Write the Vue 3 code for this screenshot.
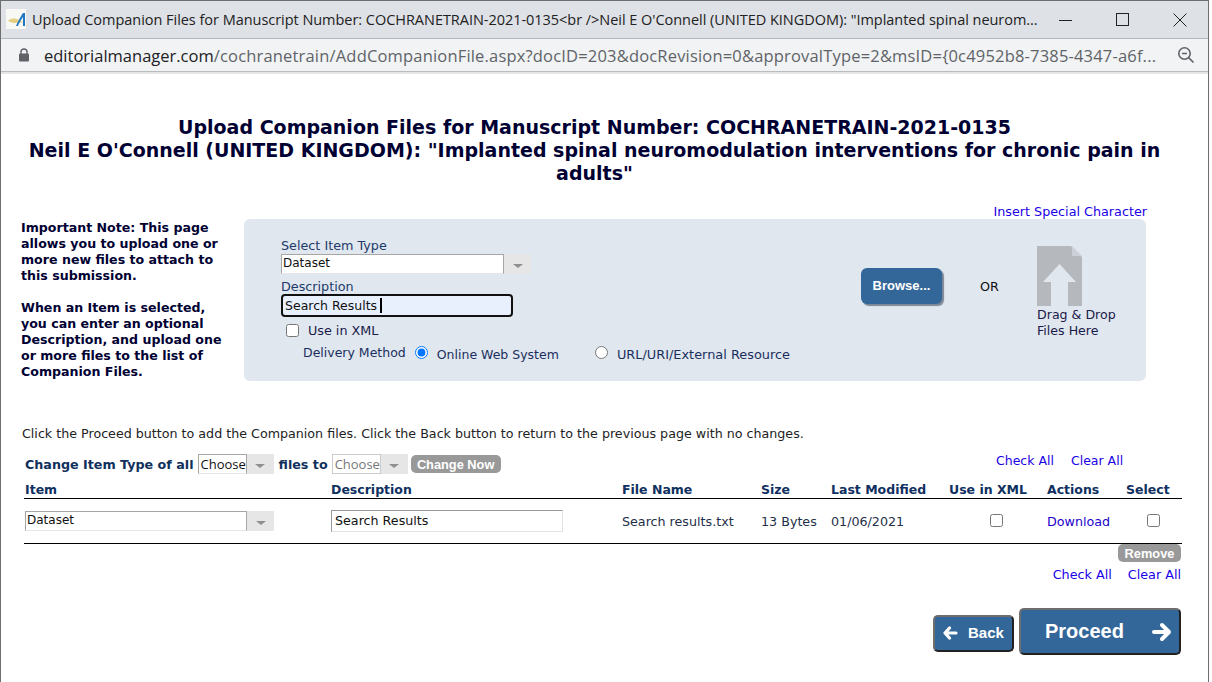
<script setup>
const headers = ['Item', 'Description', 'File Name', 'Size', 'Last Modified', 'Use in XML', 'Actions', 'Select']
</script>

<template>
  <div class="screen">
  <div class="window">
    <header class="titlebar">
      <svg class="favicon" width="20" height="20" viewBox="0 0 20 20">
        <rect width="20" height="20" fill="#f8f8f4" />
        <path d="M2 12 C5 9 9 9 13 11 L17 13 C11 15 5 14 2 12Z" fill="#e6cf82" />
        <path d="M10 17 C12 12 15 7 17 4 L19 4 L19 17 L17 17 L17 8 C15 11 13 14 12 17Z" fill="#1f78c1" />
      </svg>
      <div class="wintitle">Upload Companion Files for Manuscript Number: COCHRANETRAIN-2021-0135&lt;br /&gt;Neil E O'Connell (UNITED KINGDOM): "Implanted spinal neurom...</div>
      <div class="wincontrols">
        <svg width="14" height="14" viewBox="0 0 14 14"><path d="M0 7.5H13" stroke="#222" fill="none" /></svg>
        <svg width="14" height="14" viewBox="0 0 14 14"><rect x="0.5" y="0.5" width="12" height="12" stroke="#222" fill="none" /></svg>
        <svg width="14" height="14" viewBox="0 0 14 14"><path d="M0.5 0.5L13.5 13.5M13.5 0.5L0.5 13.5" stroke="#222" fill="none" /></svg>
      </div>
    </header>
    <div class="addressbar">
      <svg width="12" height="14" viewBox="0 0 12 14" class="lock">
        <rect x="1" y="5.5" width="10" height="8" rx="1" fill="#5f6368" />
        <path d="M3 6V4a3 3 0 0 1 6 0v2" fill="none" stroke="#5f6368" stroke-width="1.4" />
      </svg>
      <div class="url"><span class="host">editorialmanager.com</span><span class="path">/cochranetrain/AddCompanionFile.aspx?docID=203&amp;docRevision=0&amp;approvalType=2&amp;msID={0c4952b8-7385-4347-a6f...</span></div>
      <svg width="18" height="18" viewBox="0 0 18 18" class="zoomicon">
        <circle cx="7.5" cy="7.5" r="5.7" fill="none" stroke="#5f6368" stroke-width="1.6" />
        <path d="M5 7.5H10M11.6 11.6L16.5 16.5" fill="none" stroke="#5f6368" stroke-width="1.6" />
      </svg>
    </div>

    <main class="page">
      <h1 class="title">Upload Companion Files for Manuscript Number: COCHRANETRAIN-2021-0135<br />Neil E O'Connell (UNITED KINGDOM): "Implanted spinal neuromodulation interventions for chronic pain in adults"</h1>

      <div class="special"><a>Insert Special Character</a></div>

      <section class="upload">
        <aside class="note">
          <p>Important Note: This page allows you to upload one or more new files to attach to this submission.</p>
          <p>When an Item is selected, you can enter an optional Description, and upload one or more files to the list of Companion Files.</p>
        </aside>
        <div class="panel">
          <div class="form">
            <label class="lbl">Select Item Type</label>
            <div class="select big">
              <span class="sel-text">Dataset</span><span class="sel-arrow"><i></i></span>
            </div>
            <label class="lbl desc-lbl">Description</label>
            <div class="focusinput"><span>Search Results</span><b class="caret"></b></div>
            <label class="xml"><input type="checkbox" /><span>Use in XML</span></label>
            <div class="delivery">
              <span class="dm">Delivery Method</span>
              <input type="radio" name="dm" checked />
              <span class="opt">Online Web System</span>
              <input class="r2" type="radio" name="dm" />
              <span class="opt url-opt">URL/URI/External Resource</span>
            </div>
          </div>
          <button class="browse">Browse...</button>
          <span class="or">OR</span>
          <div class="drop">
            <svg width="45" height="60" viewBox="0 0 45 60">
              <path d="M0 0H34L45 11V60H0Z" fill="#b5b9bd" />
              <path d="M35 0L45 10H35Z" fill="#ccd1d9" />
              <path d="M22.5 18L39 36H31V60H14V36H6Z" fill="#e0e7ef" />
            </svg>
            <div>Drag &amp; Drop<br />Files Here</div>
          </div>
        </div>
      </section>

      <p class="instr">Click the Proceed button to add the Companion files. Click the Back button to return to the previous page with no changes.</p>

      <div class="bulk">
        <div class="change">
          <b>Change Item Type of all</b>
          <div class="select small"><span class="sel-text">Choose</span><span class="sel-arrow"><i></i></span></div>
          <b>files to</b>
          <div class="select small disabled"><span class="sel-text">Choose</span><span class="sel-arrow"><i></i></span></div>
          <button class="gray">Change Now</button>
        </div>
        <div class="links top"><a>Check All</a><a>Clear All</a></div>
      </div>

      <div class="grid head">
        <span v-for="h in headers" :key="h">{{ h }}</span>
      </div>
      <div class="grid row">
        <div class="select item"><span class="sel-text">Dataset</span><span class="sel-arrow"><i></i></span></div>
        <div class="descinput">Search Results</div>
        <span>Search results.txt</span>
        <span>13 Bytes</span>
        <span>01/06/2021</span>
        <span class="center-xml"><input type="checkbox" /></span>
        <a class="dl">Download</a>
        <span class="center-sel"><input type="checkbox" /></span>
      </div>

      <div class="after">
        <button class="gray remove">Remove</button>
        <div class="links bottom"><a>Check All</a><a>Clear All</a></div>
      </div>

      <div class="nav">
        <button class="back">
          <svg width="15" height="14" viewBox="0 0 15 14"><path d="M6.5 2L2 7L6.5 12M3 7H13" fill="none" stroke="#fff" stroke-width="3.2" stroke-linecap="round" stroke-linejoin="round" /></svg>
          <span>Back</span>
        </button>
        <button class="proceed">
          <span>Proceed</span>
          <svg width="21" height="20" viewBox="0 0 21 20"><path d="M11 3L18 10L11 17M17 10H3" fill="none" stroke="#fff" stroke-width="4" stroke-linecap="round" stroke-linejoin="round" /></svg>
        </button>
      </div>
    </main>
  </div>
  </div>
</template>

<style scoped>
.screen { width: 1212px; height: 682px; background: #fff; overflow: hidden; }
.window {
  width: 1209px;
  height: 682px;
  box-sizing: border-box;
  border: solid #6e6e6e;
  border-width: 1px 1px 0 1px;
  overflow: hidden;
  background: #fff;
  font-family: "DejaVu Sans", Verdana, sans-serif;
  color: #000033;
}
.titlebar {
  height: 37px;
  background: #dee1e6;
  display: flex;
  align-items: center;
  padding-left: 5px;
  border-bottom: 1px solid #b6b8bb;
}
.favicon { flex: none; margin-top: -2px; }
.wintitle {
  margin-left: 6px;
  width: 1010px;
  white-space: nowrap;
  overflow: hidden;
  font: 14.5px "Open Sans", sans-serif;
  letter-spacing: -0.035px;
  color: #222;
}
.wincontrols {
  margin-left: 17px;
  display: flex;
  gap: 43px;
  align-items: center;
}
.addressbar {
  height: 32px;
  background: #f1f3f4;
  display: flex;
  align-items: center;
  border-bottom: 1px solid #b9bbbd;
  box-shadow: 0 2px 0 #e6e6e6;
  position: relative;
}
.lock { margin-left: 17px; flex: none; }
.url {
  margin-left: 14px;
  width: 1119px;
  white-space: nowrap;
  overflow: hidden;
  font: 16.5px "Open Sans", sans-serif;
  color: #5f6368;
}
.host { color: #202124; }
.path { letter-spacing: 0.18px; }
.zoomicon { margin-left: 14px; flex: none; }

.page { padding: 0 26px 0 20px; font-size: 12.75px; }
.title {
  margin: 44px 14px 0 0;
  font-size: 19px;
  line-height: 23px;
  font-weight: bold;
  text-align: center;
  color: #000033;
}
.special {
  margin-top: 19px;
  height: 15px;
  padding-right: 35px;
  text-align: right;
  line-height: 16px;
}
a { color: #1a00e6; }
.upload { display: flex; }
.note {
  width: 223px;
  box-sizing: border-box;
  padding-right: 20px;
  flex: none;
  font-weight: bold;
  font-size: 12.6px;
  line-height: 16px;
  color: #000033;
  padding-top: 1px;
}
.note p { margin: 0 0 16px; }
.panel {
  width: 902px;
  height: 162px;
  background: #e0e7ef;
  border-radius: 6px;
  display: flex;
  align-items: flex-start;
  position: relative;
}
.form { width: 617px; padding: 19px 0 0 37px; box-sizing: border-box; flex: none; color: #1b2f5e; }
.lbl { display: block; line-height: 15px; color: #1d3a6a; }
.select { display: flex; height: 20px; background: #fff; box-sizing: border-box; font-size: 12px; color: #111; }
.sel-text {
  flex: 1;
  border: 1px solid #a6a6a6;
  border-bottom-color: #e6e6e6;
  line-height: 17px;
  padding-left: 1px;
  overflow: hidden;
}
.sel-arrow {
  flex: none;
  width: 27px;
  background: #e6e6e6;
  display: flex;
  align-items: center;
  justify-content: center;
}
.sel-arrow i {
  width: 0;
  height: 0;
  border: 5px solid transparent;
  border-top: 4px solid #8f8f8f;
  border-bottom: 0;
  margin-top: 3px;
}
.big { width: 250px; margin-top: 1px; }
.desc-lbl { margin-top: 5px; }
.focusinput {
  width: 232px;
  height: 23px;
  box-sizing: border-box;
  border: 2px solid #111;
  border-radius: 4px;
  background: #e8f0fe;
  color: #111;
  font-size: 12.5px;
  line-height: 19px;
  padding-left: 2px;
  display: flex;
  align-items: center;
}
.caret { width: 2px; height: 15px; background: #000; margin-left: 3px; }
.xml { display: flex; align-items: center; margin: 5px 0 0 4px; height: 16px; color: #1b1b4a; }
.xml input { margin: 0 9px 0 1px; }
.delivery { display: flex; align-items: center; margin: 8px 0 0 22px; height: 16px; white-space: nowrap; color: #1b2f5e; font-size: 12.5px; }
.dm { margin-right: 9px; margin-top: -3px; }
.delivery input { margin: -3px 0 0 0; }
.opt { margin-left: 9px; }
.url-opt { font-size: 12.9px; }
.r2 { margin-left: 36px !important; }
.browse {
  margin-top: 49px;
  width: 81px;
  height: 36px;
  border: 0;
  border-radius: 6px;
  background: #336699;
  color: #fff;
  font: bold 13px "Liberation Sans", sans-serif;
  box-shadow: 2px 2px 1px #7b8794;
  padding: 0 0 1px;
}
.or { margin: 60px 0 0 38px; width: 57px; color: #111; flex: none; line-height: 15px; }
.drop { margin-top: 27px; color: #1a1a4a; line-height: 16px; font-size: 12.6px; }
.drop svg { display: block; margin-bottom: 1px; }
.instr { margin: 30px 0 0 1px; line-height: 16px; color: #222; font-size: 12.68px; }
.bulk { display: flex; margin-top: 10px; height: 24px; align-items: center; }
.change { display: flex; align-items: center; margin-left: 4px; width: 971px; color: #10305c; }
.change b { font-size: 12.7px; margin-right: 4px; }
.small { width: 76px; height: 20px; margin: 0 5px 0 0; padding-top: 0; }
.small .sel-text { line-height: 20px; font: 13px/19px "Open Sans", sans-serif; padding-left: 2px; border-bottom-color: #e6e6e6; }
.small .sel-arrow { width: 27px; }
.disabled { color: #777; }
.disabled .sel-text { border-color: #ccc; color: #777; }
.gray {
  border: 0;
  background: #999;
  color: #fff;
  font: bold 12.8px "Liberation Sans", sans-serif;
  border-radius: 5px;
  height: 18px;
  padding: 0;
  white-space: nowrap;
}
.change .gray { margin-left: -2px; width: 90px; }
.links { display: flex; gap: 17px; font-size: 12.5px; }
.links.top { margin-top: -7px; }
.grid {
  display: grid;
  grid-template-columns: 307px 291px 139px 70px 118px 98px 79px 56px;
  margin-left: 3px;
  width: 1158px;
  align-items: center;
  white-space: nowrap;
  font-size: 12.7px;
}
.head {
  height: 19px;
  border-bottom: 1px solid #000;
  font-weight: bold;
  font-size: 12.5px;
  color: #0f3060;
  box-sizing: border-box;
  margin-top: 4px;
}
.head span:first-child { margin-left: 1px; }
.row {
  height: 45px;
  border-bottom: 1px solid #000;
  box-sizing: border-box;
  color: #1f2f4a;
}
.item { width: 249px; height: 20px; margin-left: 1px; }
.descinput {
  width: 232px;
  height: 22px;
  box-sizing: border-box;
  border: 1px solid #e2e2e2;
  border-left-color: #999;
  border-top-color: #999;
  line-height: 19px;
  padding-left: 3px;
  color: #111;
}
.center-xml { padding-left: 37px; margin-top: -2px; }
.center-sel { padding-left: 17px; margin-top: -2px; }
.dl { color: #2200cc; }
.after { display: flex; flex-direction: column; align-items: flex-end; margin-top: 0; width: 1160px; }
.remove { width: 63px; }
.links.bottom { margin-top: 5px; line-height: 16px; gap: 16px; font-size: 12.75px; }
.nav { display: flex; justify-content: flex-end; align-items: center; gap: 5px; margin-top: 25px; width: 1160px; }
.back, .proceed {
  background: #336699;
  color: #fff;
  border: 2px solid;
  border-color: #6e6e6e #222 #222 #6e6e6e;
  border-radius: 5px;
  font-family: "Liberation Sans", sans-serif;
  font-weight: bold;
  display: flex;
  align-items: center;
  box-sizing: border-box;
}
.back { width: 81px; height: 37px; font-size: 15px; padding: 0 0 2px 8px; gap: 10px; margin-top: 4px; }
.proceed { width: 162px; height: 47px; font-size: 20px; padding: 0 0 0 24px; gap: 27px; }
</style>
<style>
html, body { margin: 0; background: #fff; }
</style>
